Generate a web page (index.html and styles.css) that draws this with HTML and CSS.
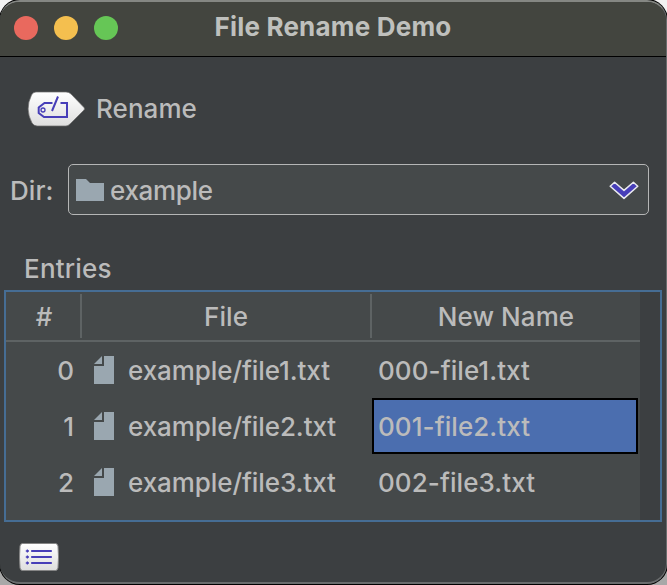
FILE: index.html
```html
<!DOCTYPE html>
<html lang="en">
<head>
<meta charset="utf-8">
<title>File Rename Demo</title>
<link rel="stylesheet" href="styles.css">
</head>
<body>
<div class="window">
  <header class="titlebar">
    <div class="lights"><i class="light red"></i><i class="light yellow"></i><i class="light green"></i></div>
    <h1 class="title"><span>File Rename Demo</span></h1>
  </header>
  <div class="toolbar">
    <svg class="tag-icon" width="60" height="38" viewBox="0 0 60 38">
      <defs>
        <linearGradient id="paper" x1="0" y1="0" x2="0" y2="1"><stop offset="0" stop-color="#fff"/><stop offset="1" stop-color="#dedede"/></linearGradient>
      </defs>
      <path d="M10 2H40Q43 2 45 4L58 17.5Q59 19 58 20L44 34Q42 36 40 36H11Q8 36 6 33Q-1.5 19 5.5 5Q7 2 10 2Z" fill="url(#paper)" stroke="#6b6b6b" stroke-width=".7"/>
      <path d="M26.5 13H18.5L12.7 17.5V23L18 27H41V13H34.5M32 6.5L26 21" fill="none" stroke="#473eb8" stroke-width="2"/>
      <circle cx="17" cy="20" r="2" fill="none" stroke="#473eb8" stroke-width="1.3"/>
    </svg>
    <span class="text rename">Rename</span>
  </div>
  <div class="directory">
    <label class="text dir-label"><span>Dir:</span></label>
    <div class="combo">
      <svg width="28" height="22" viewBox="0 0 28 22"><path d="M0 0H10L14 4H28V22H0Z" fill="#9aa7b0"/></svg>
      <span class="text dir-value">example</span>
      <svg class="chevron" width="30" height="20" viewBox="0 0 30 20">
        <path d="M1.2 6.2L5.6 2.2L15 10.4L24.4 2.2L28.8 6.2L15 18.4Z" fill="#473eb8" stroke="#e9e9ee" stroke-width="1.5" stroke-linejoin="round"/>
      </svg>
    </div>
  </div>
  <h2 class="text caption"><span>Entries</span></h2>
  <div class="table">
    <div class="grid">
      <div class="row head">
        <div class="cell"><span class="text hash">#</span></div><div class="cell"><span class="text">File</span></div><div class="cell"><span class="text newname">New Name</span></div>
      </div>
      <div class="row">
        <div class="num text">0</div>
        <div class="file"><svg width="20" height="28" viewBox="0 0 20 28"><path d="M10 0H20V28H0V10H10ZM8 0V8H0Z" fill="#9aa7b0"/></svg><span class="text path">example/file1.txt</span></div>
        <div class="name"><span class="text">000-file1.txt</span></div>
      </div>
      <div class="row">
        <div class="num text">1</div>
        <div class="file"><svg width="20" height="28" viewBox="0 0 20 28"><path d="M10 0H20V28H0V10H10ZM8 0V8H0Z" fill="#9aa7b0"/></svg><span class="text path">example/file2.txt</span></div>
        <div class="name selected"><span class="text">001-file2.txt</span></div>
      </div>
      <div class="row">
        <div class="num text">2</div>
        <div class="file"><svg width="20" height="28" viewBox="0 0 20 28"><path d="M10 0H20V28H0V10H10ZM8 0V8H0Z" fill="#9aa7b0"/></svg><span class="text path">example/file3.txt</span></div>
        <div class="name"><span class="text">002-file3.txt</span></div>
      </div>
    </div>
  </div>
  <footer class="footer">
    <svg width="42" height="30" viewBox="0 0 42 30">
      <path d="M4.5 1.5H37.5Q39.5 1.5 40 4Q41 15 40 26Q39.5 28.5 37.5 28.5H4.5Q2.5 28.5 2 26Q1 15 2 4Q2.5 1.5 4.5 1.5Z" fill="url(#paper)" stroke="#858585"/>
      <path d="M14 9H33M14 15H33M14 21H33" stroke="#473eb8" stroke-width="2.2" stroke-linecap="round"/>
      <path d="M7.8 9H11M7.8 15H11M7.8 21H11M9.4 7.6V10.4M9.4 13.6V16.4M9.4 19.6V22.4" stroke="#473eb8" stroke-width="1.3"/>
    </svg>
  </footer>
</div>
</body>
</html>
```
FILE: styles.css
```css
* { box-sizing: border-box; }
body {
  margin: 0;
  height: 585px;
  overflow: hidden;
  background: linear-gradient(#f2f2f2 0 50%, #a8a8a8 50%);
  font-family: Inter, "Liberation Sans", sans-serif;
  font-size: 26px;
  line-height: 32px;
  color: #bbb;
}
svg { display: block; flex: none; }
.window {
  height: 584px;
  overflow: hidden;
  border: solid #696c6d;
  border-width: 2px 1px 2px 0;
  border-top-color: #858783;
  border-radius: 20px;
  background: #3c3f41;
  box-shadow: 0 0 0 1px #000;
}
.titlebar {
  display: grid;
  grid-template-columns: 132px 1fr 132px;
  align-items: center;
  height: 55px;
  background: #43453f;
  border-bottom: 1px solid #000;
}
.lights { display: flex; gap: 16px; padding-left: 14px; margin-top: -2px; }
.light { width: 24px; height: 24px; border-radius: 50%; }
.red { background: #e9695e; }
.yellow { background: #f4bf4f; }
.green { background: #66c656; }
.title {
  margin: -4px 0 0;
  font-size: 26px;
  font-weight: 700;
  text-align: center;
  white-space: nowrap;
  letter-spacing: .2px;
  color: #bfc0bd;
}
.text { font-weight: 450; letter-spacing: .07px; white-space: nowrap; }
.toolbar { display: flex; align-items: center; gap: 10px; height: 102px; padding: 2px 0 0 26px; }
.directory { display: flex; align-items: center; height: 51px; margin-top: 5px; padding-right: 17px; }
.dir-label { width: 68px; padding: 2px 0 0 10px; }
.combo {
  display: flex;
  align-items: center;
  flex: 1;
  height: 51px;
  padding: 0 9px 0 7px;
  border: 1.5px solid #b5b6b6;
  border-radius: 5px;
  background: #45494a;
}
.dir-value { flex: 1; padding: 3px 0 0 6px; letter-spacing: -.3px; }
.caption { height: 75px; margin: 0; padding: 38px 0 0 24px; font-size: 26px; letter-spacing: .2px; }
.table { height: 232px; margin: 0 4px; border: 2px solid #466d94; }
.grid { width: 634px; height: 228px; background: #45494a; }
.row { display: grid; grid-template-columns: 76px 290px 268px; height: 56px; align-items: center; }
.head { height: 50px; border-bottom: 2px solid #5e6364; text-align: center; }
.cell { display: flex; align-items: center; justify-content: center; height: 44px; border-right: 2px solid #5e6364; padding-top: 2px; }
.cell:last-child { border-right: 0; }
.hash { padding-left: 2px; }
.num { padding: 2px 8px 0 0; text-align: right; }
.file { display: flex; align-items: center; gap: 14px; padding-left: 12px; }
.path { padding-top: 2px; letter-spacing: -.08px; }
.name { display: flex; align-items: center; height: 56px; padding: 2px 0 0 6px; }
.selected { margin-right: 2px; padding: 0 0 0 4px; border: 2px solid #000; background: #4b6eaf; }
.selected .text { padding-top: 2px; }
.footer { padding: 20px 0 0 18px; }
```
